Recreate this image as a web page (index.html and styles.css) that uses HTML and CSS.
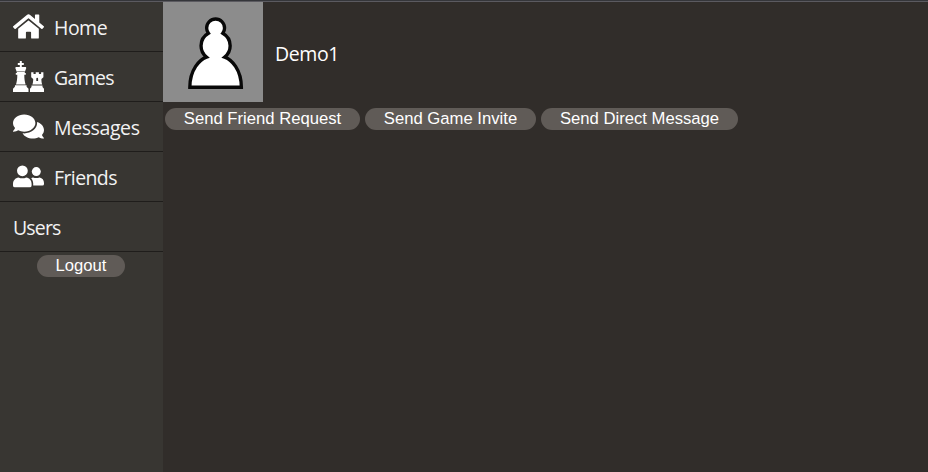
FILE: index.html
```html
<!DOCTYPE html>
<html lang="en">
<head>
<meta charset="utf-8">
<title>Demo1</title>
<link rel="stylesheet" href="styles.css">
</head>
<body>
<div class="layout">
  <nav class="sidebar">
    <a class="item"><svg class="icon" viewBox="0 0 576 512"><path d="M280.37 148.26L96 300.11V464a16 16 0 0 0 16 16l112.06-.29a16 16 0 0 0 15.92-16V368a16 16 0 0 1 16-16h64a16 16 0 0 1 16 16v95.64a16 16 0 0 0 16 16.05L464 480a16 16 0 0 0 16-16V300L295.67 148.26a12.19 12.19 0 0 0-15.3 0zM571.6 251.47L488 182.56V44.05a12 12 0 0 0-12-12h-56a12 12 0 0 0-12 12v72.61L318.47 43a48 48 0 0 0-61 0L4.34 251.47a12 12 0 0 0-1.6 16.9l25.5 31A12 12 0 0 0 45.15 301l235.22-193.74a12.19 12.19 0 0 1 15.3 0L530.9 301a12 12 0 0 0 16.9-1.6l25.5-31a12 12 0 0 0-1.7-16.93z"/></svg><span class="home">Home</span></a>
    <a class="item"><svg class="icon" viewBox="0 0 31 31"><path d="M6.800 0h2v2h2v2h-2v2h4l.5 1-1.500 4h-8L2.300 7l.5-1h4V4h-2V2h2zM3.800 10.500h8v1.500h1v1.800h-1.500c0 4 .4 6.600 1.300 9.600H3c.9-3 1.300-5.600 1.300-9.600H2.800V12h1zM2 24.300h11.600v1.500l1.900 2V31H0v-3.200l1.900-2zM18.200 11.300h2.300v1.800h2.200v-1.800h3.200v1.800h2.200v-1.800h2.300v5l-2 1.700c0 2.500.3 4 .8 5.600h-9.800c.5-1.600.8-3.100.8-5.600l-2-1.700zM23.300 17.700v2.300h1.800v-2.300a.9.9 0 0 0-1.800 0zM18.500 24.500h11v1.500l1.500 1.800V31H17v-3.200l1.500-1.800z" fill-rule="evenodd"/></svg><span class="games">Games</span></a>
    <a class="item"><svg class="icon" viewBox="0 0 576 512"><path d="M416 192c0-88.400-93.100-160-208-160S0 103.600 0 192c0 34.300 14.100 65.900 38 92-13.400 30.200-35.500 54.200-35.800 54.500-2.200 2.300-2.800 5.700-1.500 8.700S4.800 352 8 352c36.600 0 66.900-12.300 88.700-25 32.200 15.700 70.300 25 111.300 25 114.900 0 208-71.600 208-160zm122 220c23.900-26 38-57.700 38-92 0-66.900-53.500-124.200-129.300-148.100.9 6.600 1.300 13.300 1.300 20.100 0 105.900-107.700 192-240 192-10.800 0-21.300-.8-31.700-1.900C207.800 439.600 281.800 480 368 480c41 0 79.100-9.200 111.300-25 21.800 12.700 52.100 25 88.700 25 3.200 0 6.100-1.900 7.300-4.800 1.300-2.900.7-6.300-1.500-8.700-.3-.2-22.400-24.200-35.800-54.500z"/></svg><span class="messages">Messages</span></a>
    <a class="item"><svg class="icon" viewBox="0 0 31 31"><circle cx="9.400" cy="9.800" r="5.400"/><path d="M5.500 16.500Q9.400 18.200 13.300 16.500C16.500 17 18.600 19.500 18.600 23v1.400q0 1.900-1.900 1.900H1.900Q0 26.300 0 24.400V23c0-3.500 2.300-6 5.500-6.500z"/><circle cx="23.300" cy="10.600" r="4.500"/><path d="M20 16.400q3.300 1.300 6.600 0c2.700.4 4.400 2.700 4.400 5.500v1q0 1.600-1.600 1.600h-9.200c.2-3.300-.3-5.100-2-7.200q.8-.7 1.800-.9z"/></svg><span class="friends">Friends</span></a>
    <a class="item"><span class="users">Users</span></a>
    <button class="pill logout">Logout</button>
  </nav>
  <main class="content">
    <header class="profile">
      <svg class="avatar" viewBox="0 0 100 100"><path transform="translate(2.200 -3.200) scale(2.240)" d="M22.500 9c-2.210 0-4 1.790-4 4 0 .89.29 1.710.78 2.380C17.330 16.500 16 18.590 16 21c0 2.030.94 3.840 2.410 5.030-3 1.060-7.410 5.550-7.410 13.470h23c0-7.920-4.410-12.410-7.410-13.470 1.470-1.190 2.410-3 2.410-5.030 0-2.410-1.330-4.500-3.280-5.620.49-.67.78-1.490.78-2.380 0-2.210-1.790-4-4-4z"/></svg>
      <span class="name">Demo1</span>
    </header>
    <div class="actions">
      <button class="pill request">Send Friend Request</button>
      <button class="pill invite">Send Game Invite</button>
      <button class="pill direct">Send Direct Message</button>
    </div>
  </main>
</div>
</body>
</html>
```
FILE: styles.css
```css
* { box-sizing: border-box; }
body {
  margin: 0;
  height: 472px;
  overflow: hidden;
  background: #312d2a;
  border-top: 1px solid #35363a;
  color: #fff;
  font: 19.5px/28px "Open Sans", "Noto Sans", sans-serif;
}
.layout {
  display: flex;
  height: 471px;
  border-top: 1px solid #5b5a60;
}
.sidebar {
  display: flex;
  flex-direction: column;
  width: 163px;
  background: #383632;
  color: #f2f2f2;
}
.item {
  display: flex;
  align-items: center;
  gap: 10px;
  height: 50px;
  padding: 2px 13px 0;
  border-bottom: 1px solid #1f1d1b;
}
.icon {
  flex: none;
  width: 31px;
  height: 31px;
  margin-top: -3px;
  fill: #fff;
}
.home { letter-spacing: -0.5px; }
.games { letter-spacing: -0.7px; }
.messages { letter-spacing: -0.4px; }
.friends { letter-spacing: -0.6px; }
.users { letter-spacing: -0.85px; }
.pill {
  height: 22px;
  padding: 0;
  border: 0;
  border-radius: 11px;
  background: #605b57;
  color: #fff;
  font: 16.667px/22px "Liberation Sans", Arial, sans-serif;
}
.logout {
  width: 88px;
  margin: 3px 0 0 37px;
}
.content { flex: 1; }
.profile {
  display: flex;
  align-items: center;
  gap: 12px;
  height: 100px;
}
.avatar {
  width: 100px;
  height: 100px;
  background: #8c8c8c;
  fill: #fff;
  stroke: #080808;
  stroke-width: 1.5;
}
.name {
  padding-top: 4px;
  letter-spacing: -0.4px;
}
.actions {
  display: flex;
  gap: 5px;
  padding: 6px 2px;
}
.request { width: 195px; }
.invite { width: 171px; }
.direct { width: 197px; }
```
